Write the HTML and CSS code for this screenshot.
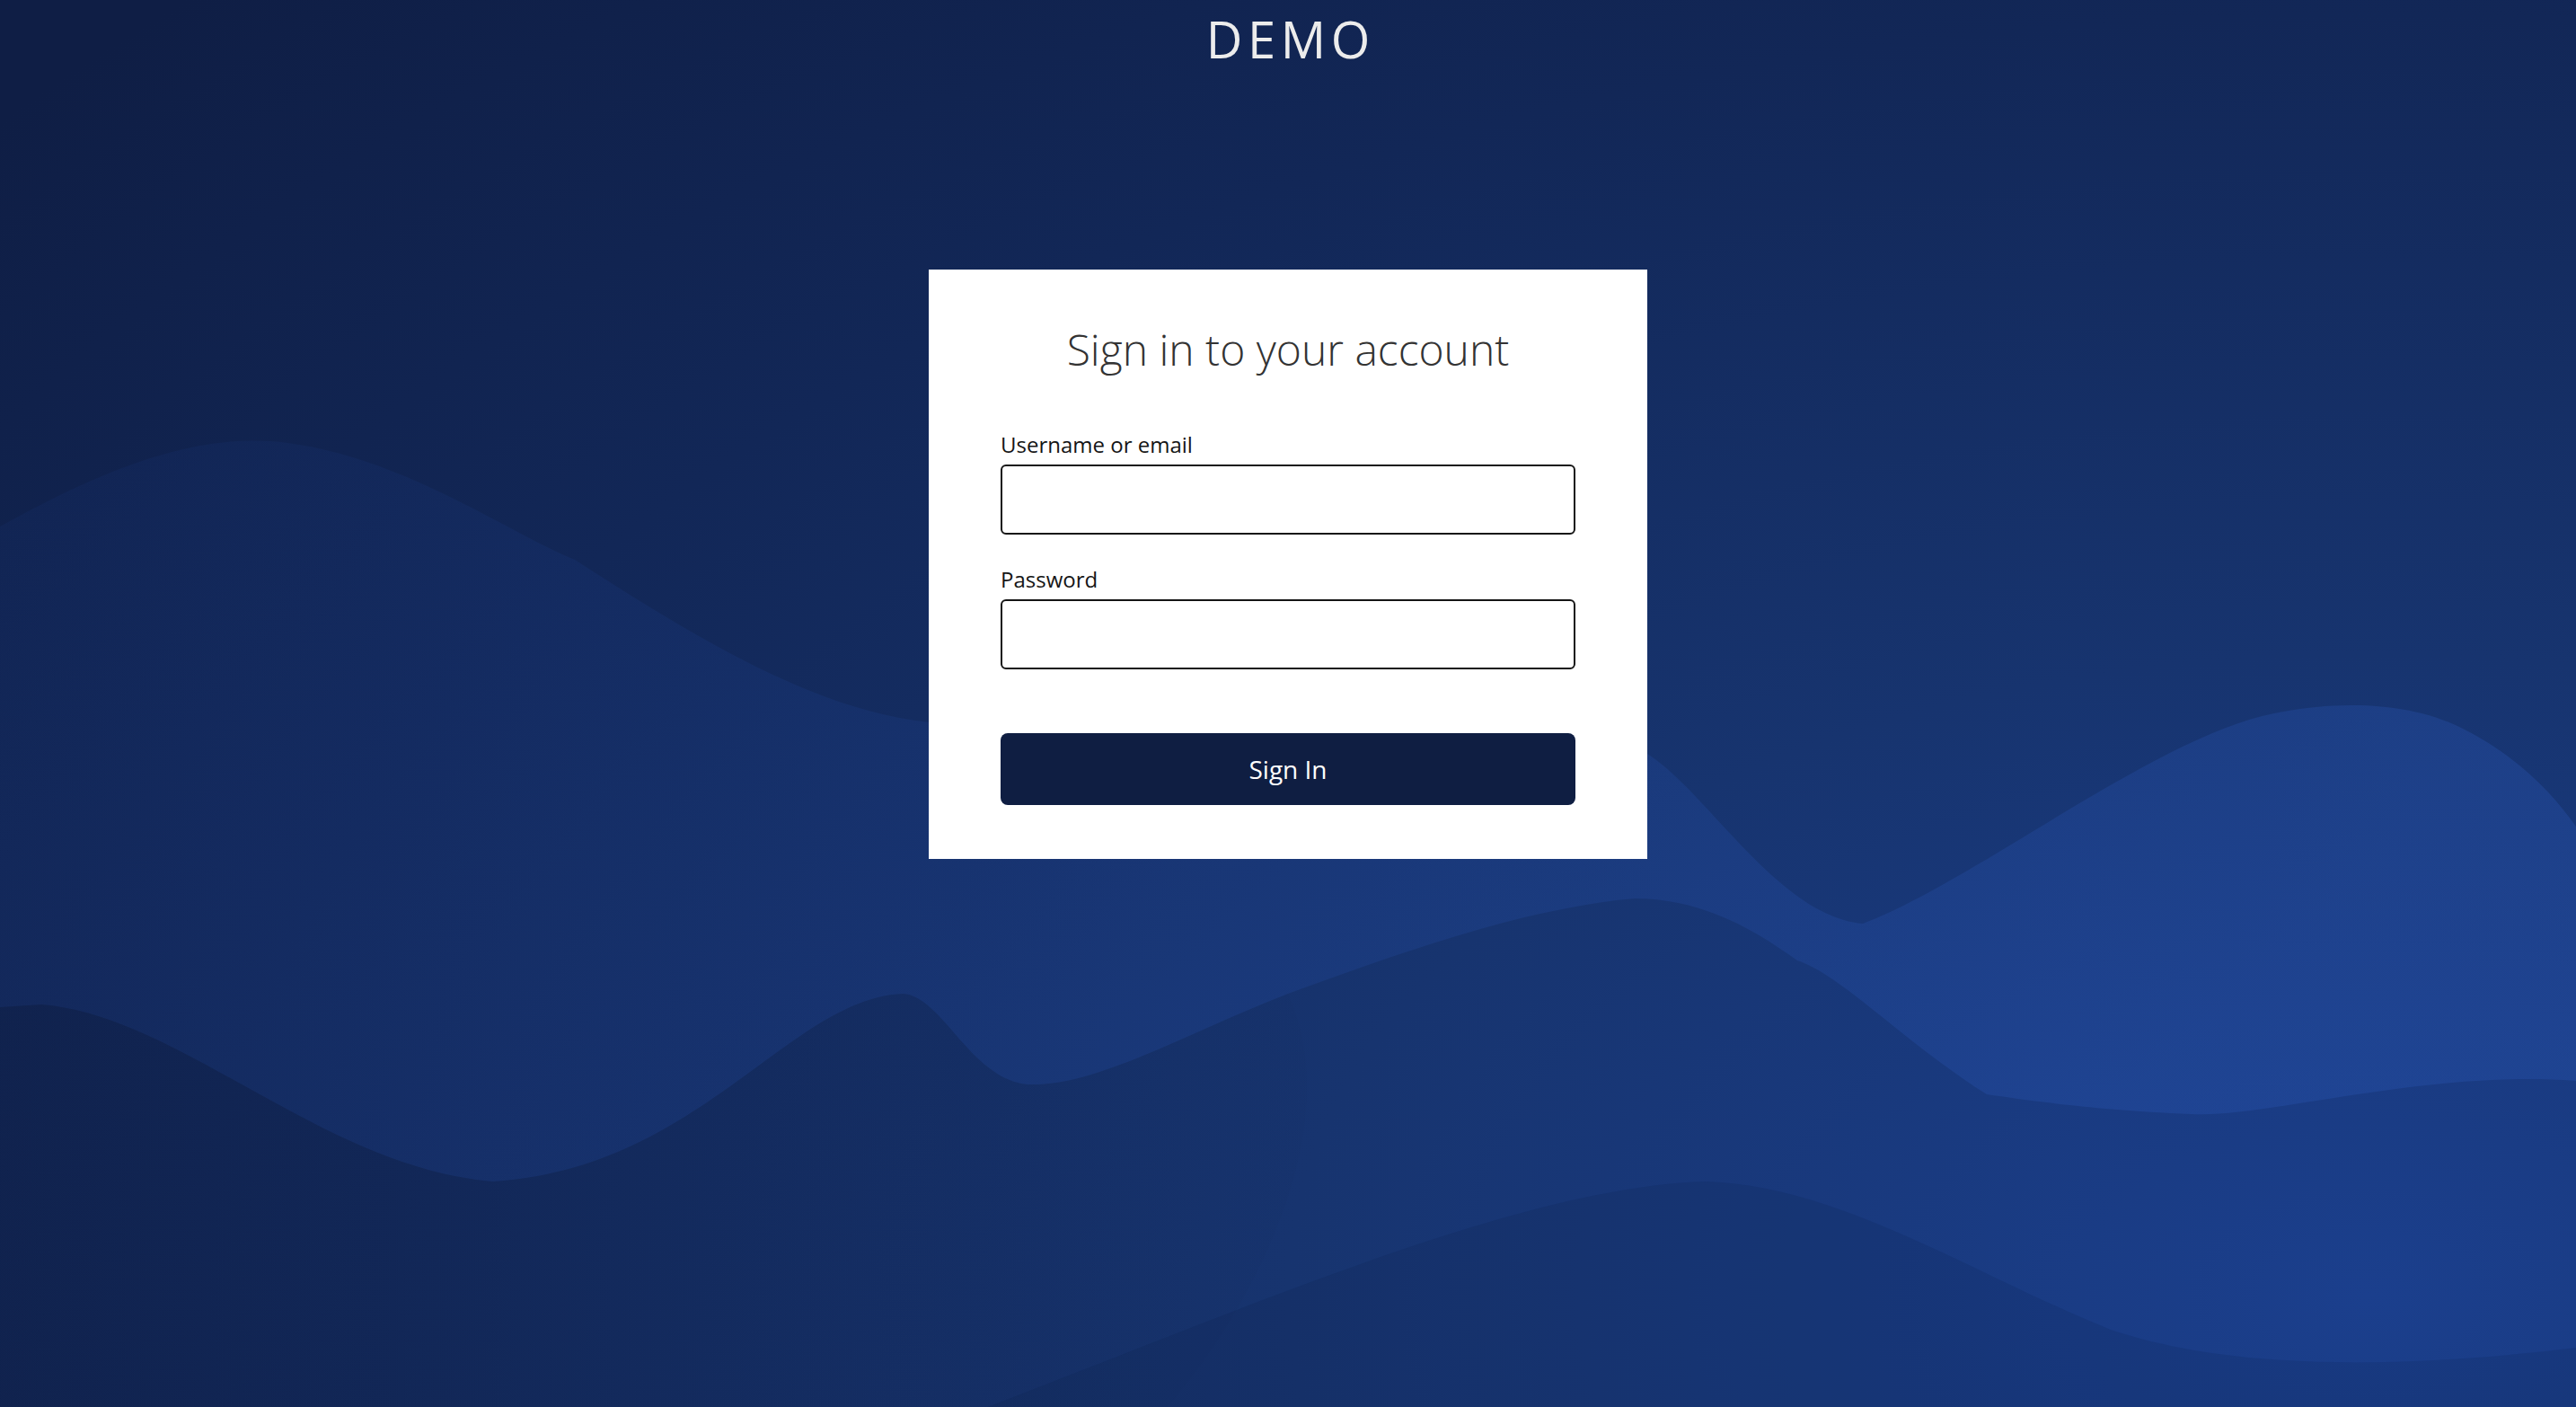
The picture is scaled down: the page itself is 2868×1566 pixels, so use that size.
FILE: index.html
```html
<!DOCTYPE html>
<html lang="en">
<head>
<meta charset="utf-8">
<title>Sign in to DEMO</title>
<link rel="stylesheet" href="styles.css">
</head>
<body>
<svg class="bg-waves" viewBox="0 0 2868 1566" preserveAspectRatio="none" aria-hidden="true">
  <defs>
    <linearGradient id="bandGrad" x1="0" y1="0" x2="1" y2="0.3">
      <stop offset="0" stop-color="#1a3a86" stop-opacity="0.12"/>
      <stop offset="0.5" stop-color="#2148a0" stop-opacity="0.2"/>
      <stop offset="1" stop-color="#2a56b4" stop-opacity="0.32"/>
    </linearGradient>
    <linearGradient id="shadeGrad" x1="0" y1="0" x2="1" y2="0">
      <stop offset="0" stop-color="#0a1535" stop-opacity="0.3"/>
      <stop offset="1" stop-color="#0a1535" stop-opacity="0.05"/>
    </linearGradient>
  </defs>
  <path fill="url(#bandGrad)" d="M0,586 C120,520 220,480 320,493 C450,510 560,590 640,623 C760,700 900,790 1035,804 L1834,839 C1900,880 1980,1020 2074,1028 C2200,980 2400,820 2532,794 C2600,780 2680,780 2740,810 C2800,840 2840,880 2868,920 L2868,1203 C2700,1190 2520,1245 2440,1240 C2330,1235 2260,1225 2212,1218 C2120,1160 2050,1085 2001,1069 C1960,1040 1900,1000 1820,1000 C1700,1010 1560,1060 1434,1106 C1320,1150 1220,1210 1144,1207 C1080,1200 1050,1110 1006,1106 C880,1110 780,1300 549,1315 C360,1300 200,1130 46,1118 L0,1121 Z"/>
  <path fill="url(#shadeGrad)" d="M0,1121 L46,1118 C200,1130 360,1300 549,1315 C780,1300 880,1110 1006,1106 C1050,1110 1080,1200 1144,1207 C1220,1210 1320,1150 1434,1106 C1500,1250 1400,1450 1300,1566 L0,1566 Z" opacity="0.5"/>
  <path fill="#0b1636" opacity="0.12" d="M1100,1566 C1400,1450 1700,1320 1900,1315 C2050,1320 2200,1420 2350,1480 C2500,1530 2700,1520 2868,1500 L2868,1566 Z"/>
</svg>

<div class="page">
  <header class="brand">DEMO</header>
  <main class="card">
    <h1 class="card-title">Sign in to your account</h1>
    <form class="login-form" onsubmit="return false;">
      <div class="field">
        <label class="field-label" for="username">Username or email</label>
        <input class="field-input" id="username" type="text">
      </div>
      <div class="field field-second">
        <label class="field-label" for="password">Password</label>
        <input class="field-input" id="password" type="password">
      </div>
      <button class="submit-btn" type="submit">Sign In</button>
    </form>
  </main>
</div>
</body>
</html>
```

FILE: styles.css
```css
html, body {
  margin: 0;
  padding: 0;
  height: 100%;
}

body {
  font-family: "Open Sans", "Noto Sans", sans-serif;
  background: radial-gradient(ellipse 120% 130% at 92% 92%, #1b3f8d 0%, #17346f 35%, #122757 70%, #0f1e45 100%);
  overflow: hidden;
  position: relative;
}

.bg-waves {
  position: absolute;
  left: 0;
  top: 0;
  width: 100%;
  height: 100%;
  display: block;
}

.page {
  position: relative;
  display: flex;
  flex-direction: column;
  align-items: center;
}

.brand {
  padding-top: 10px;
  font-size: 56px;
  line-height: 67px;
  letter-spacing: 0.1em;
  margin-right: -0.1em;
  color: #ececec;
  font-weight: 400;
}

.card {
  margin-top: 223px;
  width: 800px;
  box-sizing: border-box;
  padding: 60px 80px 60px;
  background: #ffffff;
}

.card-title {
  margin: 0;
  font-size: 48px;
  line-height: 57.6px;
  font-weight: 300;
  color: #333333;
  text-align: center;
}

.login-form {
  margin-top: 60px;
  display: flex;
  flex-direction: column;
}

.field {
  display: flex;
  flex-direction: column;
}

.field-second {
  margin-top: 33px;
}

.field-label {
  font-size: 24px;
  line-height: 34px;
  color: #151515;
}

.field-input {
  margin-top: 5px;
  height: 78px;
  box-sizing: border-box;
  border: 2px solid #151515;
  border-radius: 6px;
  background: #ffffff;
  font-family: inherit;
  font-size: 28px;
  padding: 0 16px;
  outline: none;
}

.submit-btn {
  margin-top: 71px;
  height: 80px;
  border: 0;
  border-radius: 8px;
  background: #0f1e42;
  color: #ffffff;
  font-family: inherit;
  font-size: 28px;
  font-weight: 400;
  cursor: pointer;
}
```
